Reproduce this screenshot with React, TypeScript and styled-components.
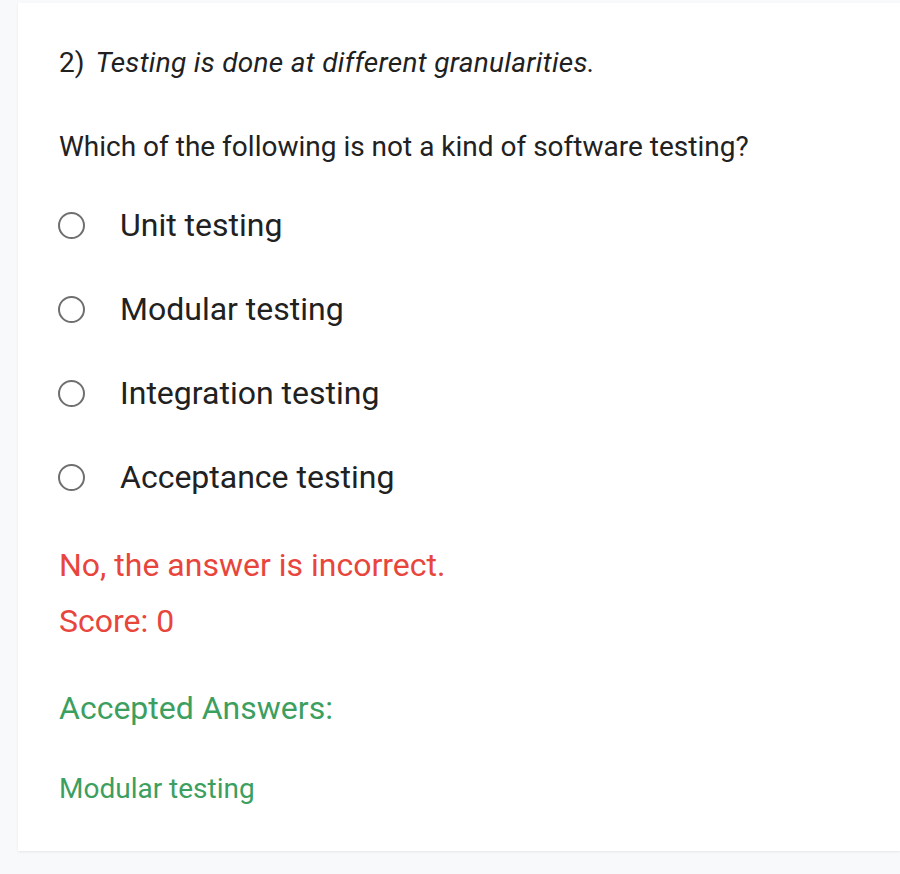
import React from "react";
import styled, { createGlobalStyle } from "styled-components";

const Global = createGlobalStyle`
  html, body { margin: 0; padding: 0; background: #f8f9fb; }
  body { font-family: Roboto, "Noto Sans", sans-serif; color: #212121; }
`;

const Page = styled.div`
  padding: 3px 0 22px 18px;
  min-height: 874px;
  box-sizing: border-box;
`;

const Card = styled.div`
  background: #ffffff;
  padding: 40px 41px 42px;
  box-shadow: 0 1px 2px rgba(0, 0, 0, 0.08);
`;

const Title = styled.div`
  font-size: 28px;
  line-height: 40px;
  margin-bottom: 44px;
  em { font-style: italic; margin-left: 11px; letter-spacing: 0.3px; }
`;

const Question = styled.div`
  font-size: 28px;
  line-height: 40px;
  margin-bottom: 16px;
`;

const Options = styled.div`
  display: flex;
  flex-direction: column;
`;

const Option = styled.label`
  display: flex;
  align-items: center;
  height: 84px;
  font-size: 32px;
`;

const Radio = styled.span`
  width: 23px;
  height: 23px;
  border: 2px solid #6f6f6f;
  border-radius: 50%;
  margin-left: -1px;
  margin-right: 35px;
  flex-shrink: 0;
`;

const Feedback = styled.div<{ $color: string; $size: number; $mt: number }>`
  color: ${(p) => p.$color};
  font-size: ${(p) => p.$size}px;
  line-height: 40px;
  margin-top: ${(p) => p.$mt}px;
`;

const options = ["Unit testing", "Modular testing", "Integration testing", "Acceptance testing"];

export default function App() {
  return (
    <>
      <Global />
      <Page>
        <Card>
          <Title>
            2)<em>Testing is done at different granularities.</em>
          </Title>
          <Question>Which of the following is not a kind of software testing?</Question>
          <Options>
            {options.map((o) => (
              <Option key={o}>
                <Radio />
                {o}
              </Option>
            ))}
          </Options>
          <Feedback $color="#e8453c" $size={32} $mt={26}>No, the answer is incorrect.</Feedback>
          <Feedback $color="#e8453c" $size={32} $mt={16}>Score: 0</Feedback>
          <Feedback $color="#3c9f5f" $size={32} $mt={47}>Accepted Answers:</Feedback>
          <Feedback $color="#3c9f5f" $size={28} $mt={41}>Modular testing</Feedback>
        </Card>
      </Page>
    </>
  );
}
